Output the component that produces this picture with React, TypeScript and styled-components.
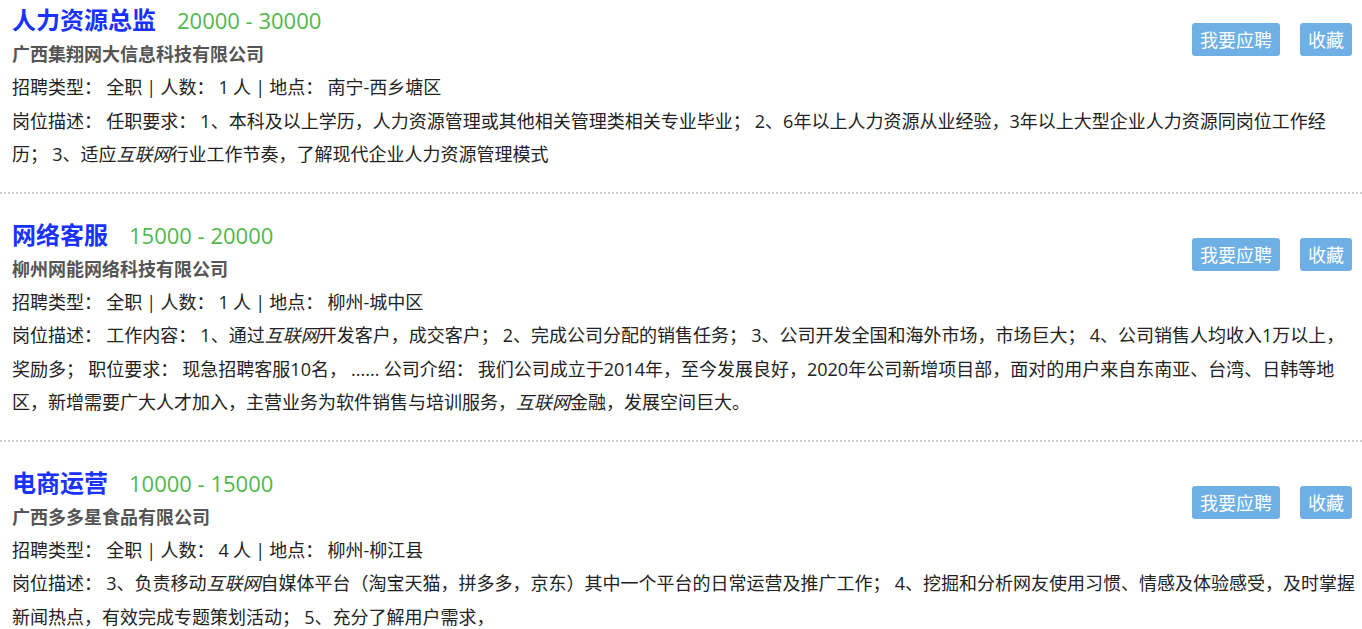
import React from 'react';
import styled, {createGlobalStyle} from 'styled-components';

const GlobalStyle = createGlobalStyle`
  html, body {
    margin: 0;
    padding: 0;
    background: #fff;
  }
  body {
    font-family: "Open Sans", "Noto Sans CJK SC", sans-serif;
    color: #222;
  }
`

type Job = {
    title: string
    salary: string
    company: string
    type: string
    count: number
    place: string
    desc: React.ReactNode
}

const jobs: Job[] = [
    {
        title: '人力资源总监',
        salary: '20000 - 30000',
        company: '广西集翔网大信息科技有限公司',
        type: '全职',
        count: 1,
        place: '南宁-西乡塘区',
        desc: <>任职要求： 1、本科及以上学历，人力资源管理或其他相关管理类相关专业毕业； 2、6年以上人力资源从业经验，3年以上大型企业人力资源同岗位工作经历； 3、适应<em>互联网</em>行业工作节奏，了解现代企业人力资源管理模式</>,
    },
    {
        title: '网络客服',
        salary: '15000 - 20000',
        company: '柳州网能网络科技有限公司',
        type: '全职',
        count: 1,
        place: '柳州-城中区',
        desc: <>工作内容： 1、通过<em>互联网</em>开发客户，成交客户； 2、完成公司分配的销售任务； 3、公司开发全国和海外市场，市场巨大； 4、公司销售人均收入1万以上，奖励多； 职位要求： 现急招聘客服10名， ...... 公司介绍： 我们公司成立于2014年，至今发展良好，2020年公司新增项目部，面对的用户来自东南亚、台湾、日韩等地区，新增需要广大人才加入，主营业务为软件销售与培训服务，<em>互联网</em>金融，发展空间巨大。</>,
    },
    {
        title: '电商运营',
        salary: '10000 - 15000',
        company: '广西多多星食品有限公司',
        type: '全职',
        count: 4,
        place: '柳州-柳江县',
        desc: <>3、负责移动<em>互联网</em>自媒体平台（淘宝天猫，拼多多，京东）其中一个平台的日常运营及推广工作； 4、挖掘和分析网友使用习惯、情感及体验感受，及时掌握新闻热点，有效完成专题策划活动； 5、充分了解用户需求，</>,
    },
]

export default function App() {
    return (
        <>
            <GlobalStyle/>
            <JobList>
                {jobs.map((job) => (
                    <JobCard key={job.title}>
                        <Head>
                            <HeadText>
                                <TitleRow>
                                    <Title>{job.title}</Title>
                                    <Salary>{job.salary}</Salary>
                                </TitleRow>
                                <Company>{job.company}</Company>
                            </HeadText>
                            <Actions>
                                <ActionButton>我要应聘</ActionButton>
                                <ActionButton>收藏</ActionButton>
                            </Actions>
                        </Head>
                        <Line>招聘类型： {job.type} | 人数： {job.count} 人 | 地点： {job.place}</Line>
                        <Line>岗位描述： {job.desc}</Line>
                    </JobCard>
                ))}
            </JobList>
        </>
    );
}

const JobList = styled.ul`
  list-style: none;
  margin: 0;
  padding: 0;
`
const JobCard = styled.li`
  padding: 24px 2px 20px 12px;
  border-bottom: 2px dotted #cfcfcf;

  &:first-child {
    padding-top: 3px;
  }
`
const Head = styled.div`
  display: flex;
  justify-content: space-between;
  align-items: flex-start;
`
const HeadText = styled.div`
  display: flex;
  flex-direction: column;
`
const TitleRow = styled.div`
  display: flex;
  align-items: baseline;
  gap: 21px;
  height: 34px;
  line-height: 34px;
`
const Title = styled.h3`
  margin: 0;
  font-size: 24px;
  font-weight: 700;
  color: #1a32ff;
`
const Salary = styled.span`
  font-size: 22px;
  color: #4fb84a;
`
const Company = styled.div`
  font-size: 18px;
  font-weight: 700;
  color: #555;
  line-height: 34px;
`
const Actions = styled.div`
  display: flex;
  gap: 20px;
  margin: 20px 8px 0 0;
`
const ActionButton = styled.button`
  height: 33px;
  padding: 0 8px;
  border: none;
  border-radius: 3px;
  background: #6eb0e6;
  color: #fff;
  font-family: "Noto Sans CJK SC", sans-serif;
  font-size: 18px;
  line-height: 33px;
  cursor: pointer;
`
const Line = styled.p`
  margin: 0;
  font-size: 18px;
  line-height: 33.5px;
  word-spacing: -0.5px;
  color: #222;

  em {
    font-style: italic;
  }
`
